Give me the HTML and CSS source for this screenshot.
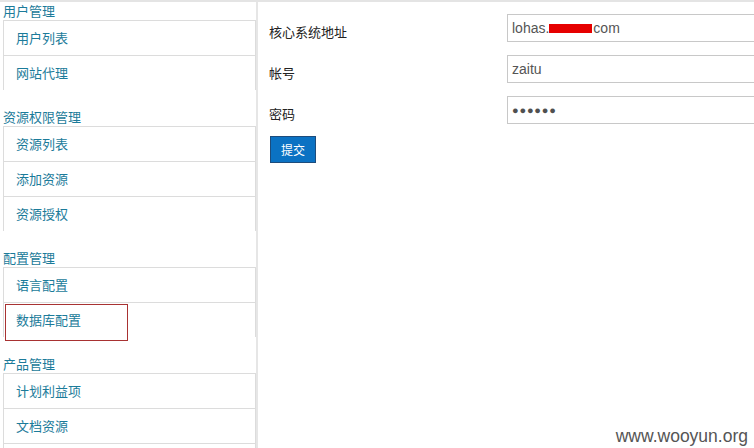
FILE: index.html
```html
<!DOCTYPE html>
<html lang="zh-CN">
<head>
<meta charset="utf-8">
<title>配置管理</title>
<link rel="stylesheet" href="styles.css">
</head>
<body>
<div class="topbar"></div>
<div class="layout">
  <aside class="sidebar">
    <section class="group">
      <div class="group-title">用户管理</div>
      <ul class="items">
        <li class="item">用户列表</li>
        <li class="item">网站代理</li>
      </ul>
    </section>
    <section class="group">
      <div class="group-title">资源权限管理</div>
      <ul class="items">
        <li class="item">资源列表</li>
        <li class="item">添加资源</li>
        <li class="item">资源授权</li>
      </ul>
    </section>
    <section class="group">
      <div class="group-title">配置管理</div>
      <ul class="items">
        <li class="item">语言配置</li>
        <li class="item marked">数据库配置<span class="mark"></span></li>
      </ul>
    </section>
    <section class="group">
      <div class="group-title">产品管理</div>
      <ul class="items">
        <li class="item">计划利益项</li>
        <li class="item">文档资源</li>
        <li class="item">&nbsp;</li>
      </ul>
    </section>
  </aside>
  <main class="main">
    <form class="form">
      <div class="row">
        <label class="label">核心系统地址</label>
        <div class="input"><span>lohas.</span><span class="redact"></span><span>com</span></div>
      </div>
      <div class="row">
        <label class="label">帐号</label>
        <div class="input"><span>zaitu</span></div>
      </div>
      <div class="row">
        <label class="label">密码</label>
        <div class="input dots"><span>●●●●●●</span></div>
      </div>
      <div class="actions">
        <button type="button" class="btn">提交</button>
      </div>
    </form>
  </main>
</div>
<div class="watermark">www.wooyun.org</div>
</body>
</html>
```

FILE: styles.css
```css
html, body {
  margin: 0;
  padding: 0;
  width: 754px;
  height: 448px;
  overflow: hidden;
  background: #ffffff;
}

body {
  position: relative;
  font-family: "Noto Sans CJK SC", "Liberation Sans", sans-serif;
  font-size: 13px;
}

.topbar {
  height: 2px;
  background: #e4e4e4;
}

.layout {
  display: flex;
  height: 446px;
}

.sidebar {
  width: 256px;
  flex: none;
  border-right: 2px solid #e6e6e6;
  overflow: hidden;
}

.group {
  margin-bottom: 18px;
}

.group-title {
  height: 18px;
  line-height: 18px;
  padding-left: 3px;
  color: #1b7b9a;
  font-size: 13px;
}

.items {
  list-style: none;
  margin: 0 0 0 3px;
  padding: 0;
}

.item {
  position: relative;
  height: 34px;
  line-height: 34px;
  padding-left: 12px;
  border-top: 1px solid #dcdcdc;
  border-left: 1px solid #dcdcdc;
  border-right: 1px solid #dcdcdc;
  color: #1b7b9a;
  font-size: 13px;
}

.mark {
  position: absolute;
  left: 1px;
  top: 1px;
  width: 121px;
  height: 35px;
  border: 1px solid #a83232;
}

.main {
  flex: 1;
  padding: 12px 0 0 11px;
  overflow: hidden;
}

.form {
  display: flex;
  flex-direction: column;
  gap: 13px;
}

.row {
  display: grid;
  grid-template-columns: 238px 280px;
  height: 28px;
}

.label {
  padding-top: 4px;
  line-height: 28px;
  color: #222;
  font-size: 13px;
}

.input {
  box-sizing: border-box;
  height: 28px;
  border: 1px solid #c8c8c8;
  padding-left: 4px;
  display: flex;
  align-items: center;
  font-family: "Liberation Sans", Arial, sans-serif;
  font-size: 14px;
  color: #555;
  white-space: nowrap;
}

.redact {
  display: inline-block;
  width: 43px;
  height: 9px;
  background: #e60000;
  margin: 0 1px 0 0;
}

.dots span {
  font-size: 11px;
  letter-spacing: 0.8px;
  color: #505050;
}

.actions {
  margin-top: -1px;
  padding-left: 1px;
}

.btn {
  width: 46px;
  height: 27px;
  padding: 0;
  background: #0b72c3;
  border: 1px solid #1d4c7c;
  color: #ffffff;
  font-family: "Noto Sans CJK SC", sans-serif;
  font-size: 12px;
  line-height: 25px;
}

.watermark {
  position: absolute;
  right: 6px;
  bottom: 1px;
  font-family: "Liberation Sans", Arial, sans-serif;
  font-size: 17.5px;
  color: #555;
}
```
